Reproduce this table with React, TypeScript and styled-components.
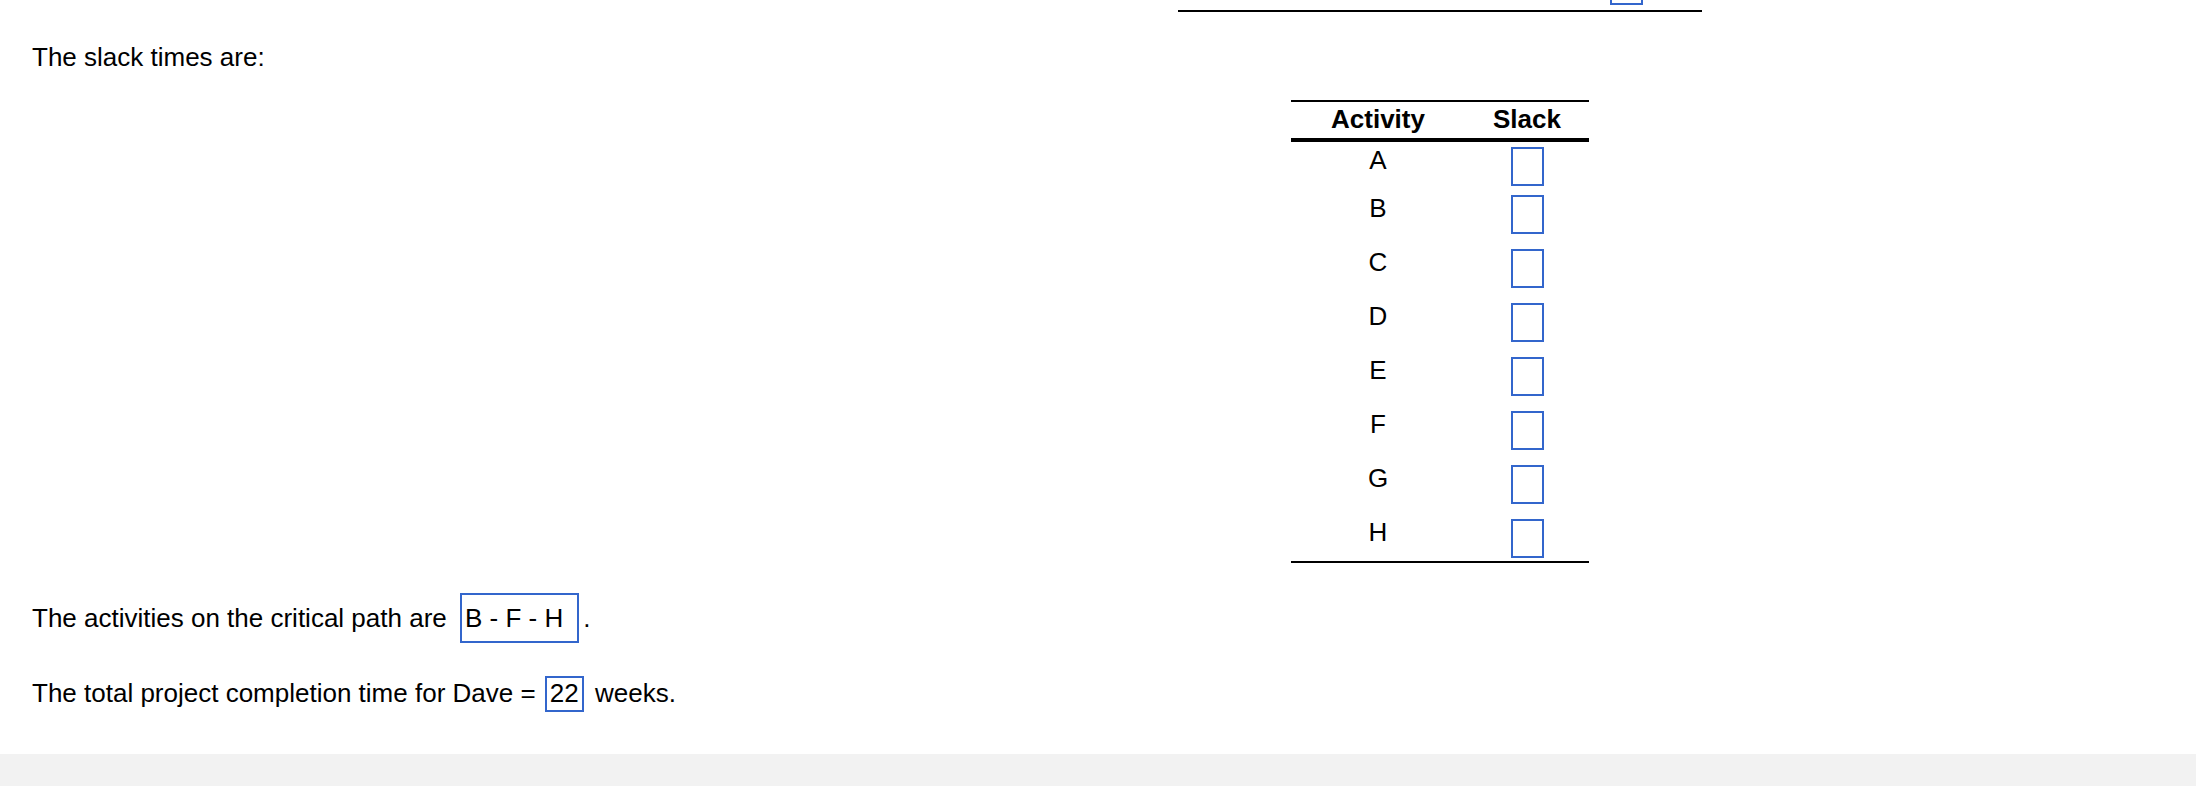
import React from "react";
import styled, { createGlobalStyle } from "styled-components";

const GlobalStyle = createGlobalStyle`
  html, body {
    margin: 0;
    padding: 0;
    background: #f2f2f2;
  }
  body {
    font-family: "Liberation Sans", Arial, Helvetica, sans-serif;
    color: #000;
  }
`;

const BLUE = "#3366cc";

const Page = styled.div`
  background: #fff;
  display: grid;
  grid-template-columns: 684px 1512px;
  font-size: 26px;
  line-height: 30px;
  padding-bottom: 42px;
`;

const Footer = styled.div`
  height: 32px;
  background: #f2f2f2;
`;

const LeftCell = styled.div`
  padding-left: 32px;
`;

const RightCell = styled.div`
  display: flex;
  justify-content: center;
  align-items: flex-start;
`;

const PrevTable = styled.div`
  width: 524px;
  height: 10px;
  border-bottom: 2px solid #000;
  display: flex;
  align-items: flex-start;
`;

const PrevBox = styled.div`
  margin-left: 432px;
  width: 33px;
  height: 5px;
  box-sizing: border-box;
  border: 2px solid ${BLUE};
  border-top: none;
`;

const Intro = styled.p`
  margin: 30px 0 0 0;
`;

const SlackTable = styled.div`
  width: 298px;
  margin-top: 88px;
  border-top: 2px solid #000;
  border-bottom: 2px solid #000;
`;

const HeaderRow = styled.div`
  display: grid;
  grid-template-columns: 174px 124px;
  padding: 2px 0 4px;
  border-bottom: 4px solid #000;
  font-weight: bold;
  text-align: center;
`;

const Body = styled.div`
  padding-top: 3px;
`;

const Row = styled.div<{ $h: number }>`
  display: grid;
  grid-template-columns: 174px 124px;
  align-items: start;
  height: ${(p) => p.$h}px;
  text-align: center;
`;

const Letter = styled.div`
  line-height: 30px;
`;

const SlackBox = styled.div`
  margin: 2px auto 0;
  width: 33px;
  height: 39px;
  box-sizing: border-box;
  border: 2px solid ${BLUE};
`;

const Statements = styled.div`
  grid-column: 1 / -1;
  padding-left: 32px;
  margin-top: 30px;
`;

const Statement = styled.p<{ $gap: number }>`
  margin: ${(p) => p.$gap}px 0 0 0;
  line-height: 30px;
`;

const AnswerBox = styled.span<{ $pad: string; $margin: string }>`
  display: inline-block;
  border: 2px solid ${BLUE};
  padding: ${(p) => p.$pad};
  margin: ${(p) => p.$margin};
  line-height: 30px;
  vertical-align: baseline;
`;

const rows: { letter: string; h: number }[] = [
  { letter: "A", h: 48 },
  { letter: "B", h: 54 },
  { letter: "C", h: 54 },
  { letter: "D", h: 54 },
  { letter: "E", h: 54 },
  { letter: "F", h: 54 },
  { letter: "G", h: 54 },
  { letter: "H", h: 44 },
];

export default function App() {
  return (
    <>
      <GlobalStyle />
      <Page>
        <div />
        <RightCell>
          <PrevTable>
            <PrevBox />
          </PrevTable>
        </RightCell>

        <LeftCell>
          <Intro>The slack times are:</Intro>
        </LeftCell>
        <RightCell>
          <SlackTable>
            <HeaderRow>
              <div>Activity</div>
              <div>Slack</div>
            </HeaderRow>
            <Body>
              {rows.map((r) => (
                <Row key={r.letter} $h={r.h}>
                  <Letter>{r.letter}</Letter>
                  <SlackBox />
                </Row>
              ))}
            </Body>
          </SlackTable>
        </RightCell>

        <Statements>
          <Statement $gap={0}>
            The activities on the critical path are{" "}
            <AnswerBox $pad="8px 14px 8px 3px" $margin="0 4px 0 6px">
              B - F - H
            </AnswerBox>
            .
          </Statement>
          <Statement $gap={33}>
            The total project completion time for Dave ={" "}
            <AnswerBox $pad="0 3px 2px 3px" $margin="0 4px 0 2px">
              22
            </AnswerBox>{" "}
            weeks.
          </Statement>
        </Statements>
      </Page>
      <Footer />
    </>
  );
}
